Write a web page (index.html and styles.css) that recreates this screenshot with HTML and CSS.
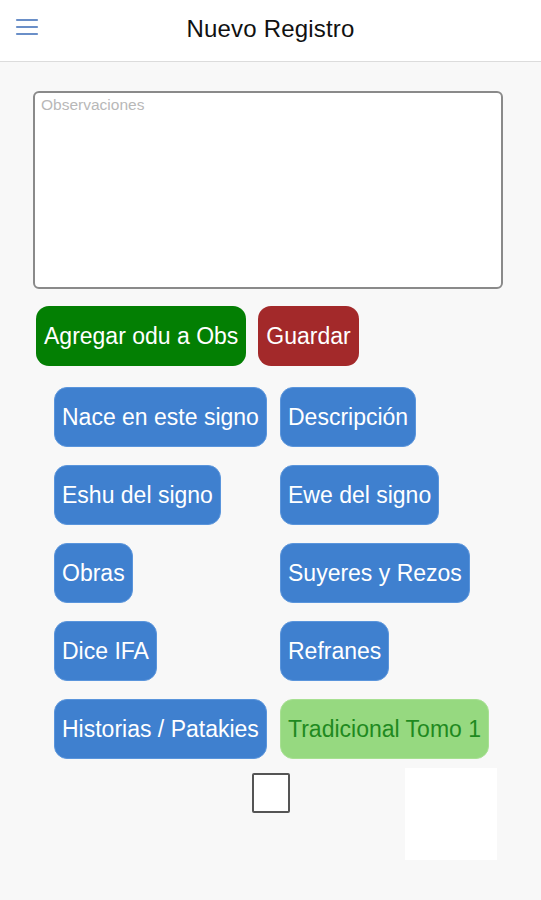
FILE: index.html
```html
<!DOCTYPE html>
<html lang="es">
<head>
<meta charset="utf-8">
<title>Nuevo Registro</title>
<link rel="stylesheet" href="styles.css">
</head>
<body>
<header class="topbar">
  <button class="menu-btn" aria-label="Menú">
    <svg width="24" height="18" viewBox="0 0 24 18"><g stroke="#6a8fc8" stroke-width="2.2" stroke-linecap="round"><line x1="2" y1="2" x2="22" y2="2"/><line x1="2" y1="9" x2="22" y2="9"/><line x1="2" y1="16" x2="22" y2="16"/></g></svg>
  </button>
  <h1 class="title">Nuevo Registro</h1>
</header>
<main class="content">
  <textarea class="obs" placeholder="Observaciones"></textarea>
  <div class="actions">
    <button class="btn btn-green">Agregar odu a Obs</button>
    <button class="btn btn-red">Guardar</button>
  </div>
  <div class="grid">
    <button class="btn btn-blue">Nace en este signo</button>
    <button class="btn btn-blue">Descripción</button>
    <button class="btn btn-blue">Eshu del signo</button>
    <button class="btn btn-blue">Ewe del signo</button>
    <button class="btn btn-blue">Obras</button>
    <button class="btn btn-blue">Suyeres y Rezos</button>
    <button class="btn btn-blue">Dice IFA</button>
    <button class="btn btn-blue">Refranes</button>
    <button class="btn btn-blue">Historias / Patakies</button>
    <button class="btn btn-light">Tradicional Tomo 1</button>
  </div>
  <div class="bottom">
    <span class="check"></span>
    <div class="adbox"></div>
  </div>
</main>
</body>
</html>
```

FILE: styles.css
```css
* { box-sizing: border-box; }
html, body { margin: 0; padding: 0; }
body {
  background: #f8f8f8;
  font-family: "Liberation Sans", Arial, sans-serif;
  width: 541px;
  height: 900px;
  overflow: hidden;
}
.topbar {
  position: relative;
  height: 62px;
  background: #ffffff;
  border-bottom: 1px solid #dcdcdc;
  display: flex;
  align-items: center;
  justify-content: center;
}
.menu-btn {
  position: absolute;
  left: 15px;
  top: 18px;
  width: 24px;
  height: 18px;
  padding: 0;
  border: 0;
  background: transparent;
  display: block;
}
.menu-btn svg { display: block; }
.title {
  margin: 0;
  font-weight: normal;
  font-size: 24px;
  color: #111;
  letter-spacing: 0.2px;
  padding-bottom: 3px;
}
.content {
  padding-top: 29px;
}
.obs {
  display: block;
  margin-left: 33px;
  width: 470px;
  height: 198px;
  border: 2px solid #8a8a8a;
  border-radius: 6px;
  background: #fff;
  resize: none;
  padding: 3px 6px;
  font-family: "Liberation Sans", Arial, sans-serif;
  font-size: 15.5px;
}
.obs::placeholder { color: #b8b8b8; }
.actions {
  display: flex;
  gap: 12px;
  margin-top: 17px;
  padding-left: 36px;
}
.btn {
  height: 60px;
  border-radius: 13px;
  border: 1px solid transparent;
  padding: 0 7px;
  font-family: "Liberation Sans", Arial, sans-serif;
  font-size: 23px;
  color: #fff;
  white-space: nowrap;
  cursor: pointer;
}
.btn-green { background: #037f03; }
.btn-red { background: #a3292a; }
.btn-blue { background: #3f80cf; border-color: #5a95dc; }
.btn-light { background: #96d980; color: #1f8a1f; border-color: #a7e092; }
.grid {
  display: grid;
  grid-template-columns: 214px auto;
  column-gap: 12px;
  row-gap: 18px;
  justify-items: start;
  justify-content: start;
  margin-top: 21px;
  padding-left: 54px;
}
.bottom {
  display: grid;
  grid-template-columns: 1fr 38px 1fr;
  margin-top: 9px;
}
.check {
  grid-column: 2;
  margin-top: 5px;
  width: 38px;
  height: 40px;
  border: 2px solid #555;
  border-radius: 2px;
  background: #fff;
}
.adbox {
  grid-column: 3;
  margin-left: 115px;
  width: 92px;
  height: 92px;
  background: #ffffff;
}
```
